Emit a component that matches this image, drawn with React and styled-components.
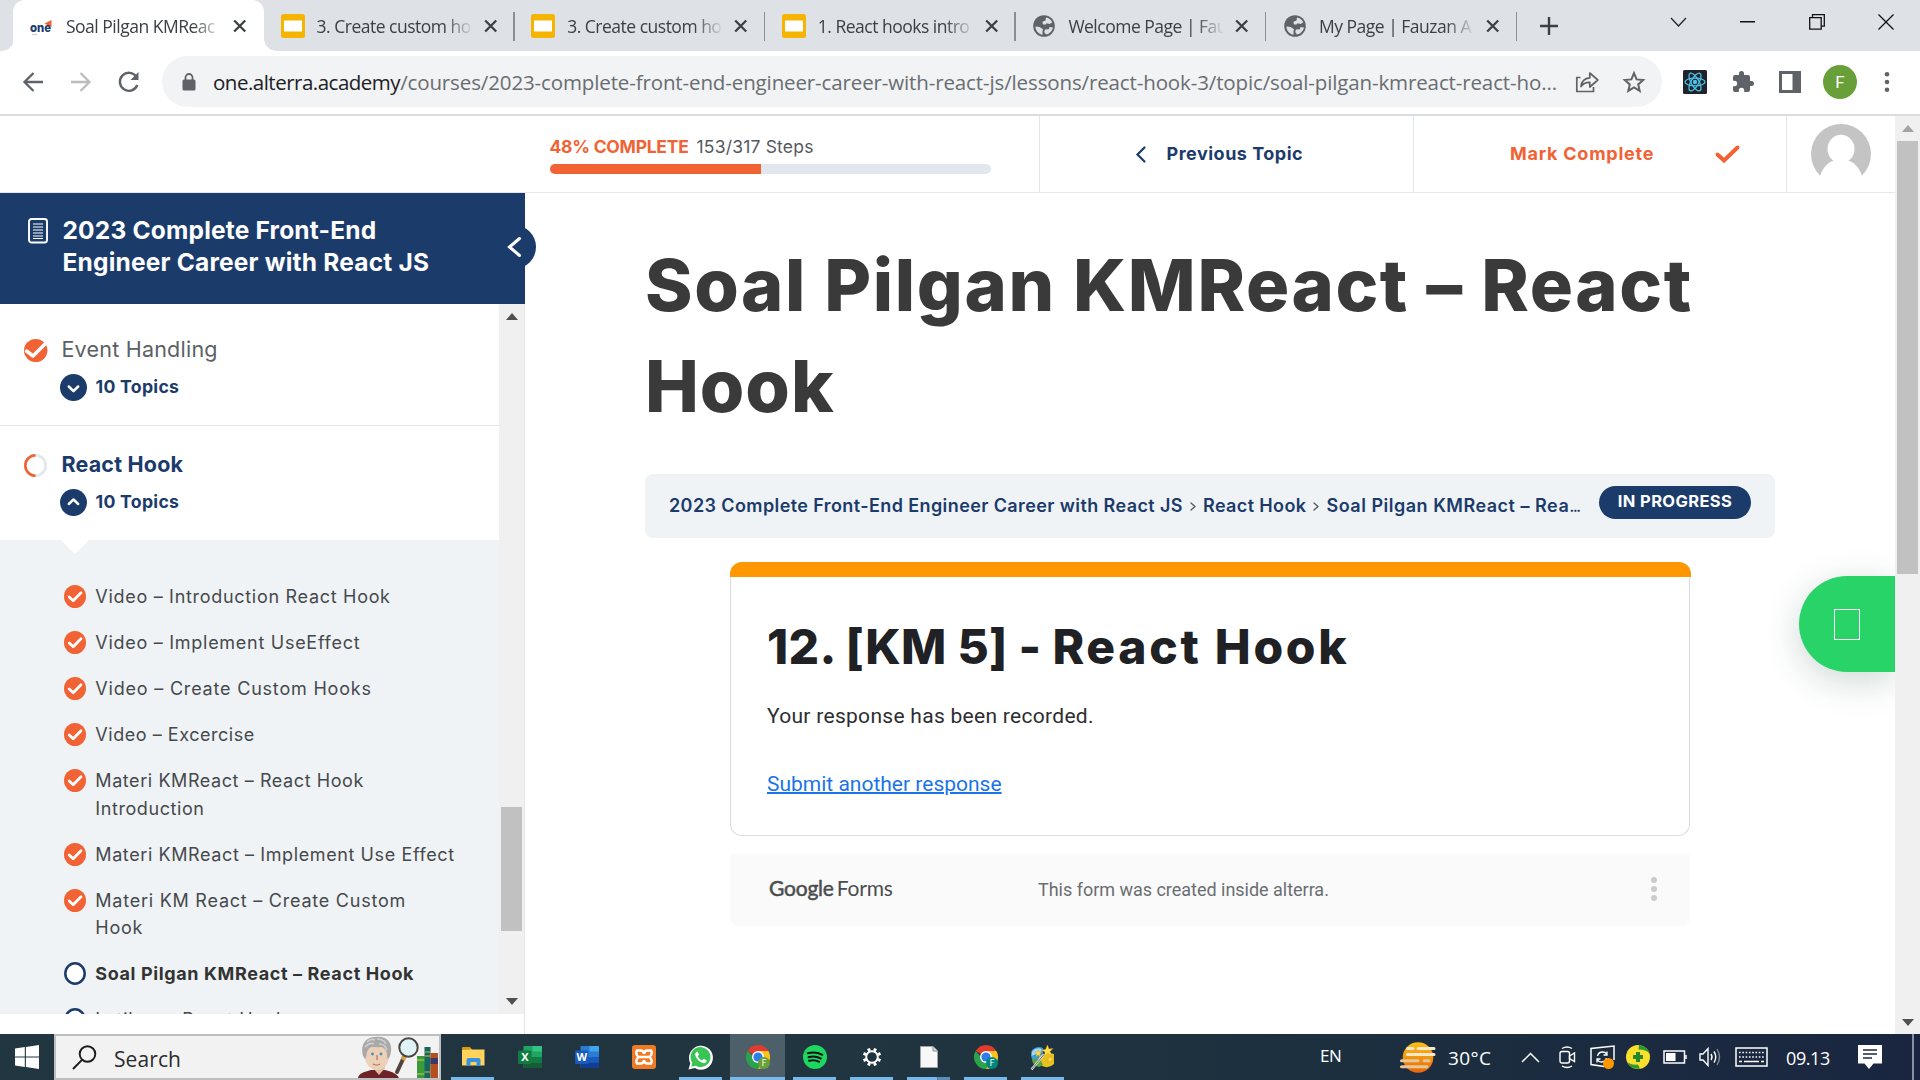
import React from 'react';
import styled, { createGlobalStyle, css } from 'styled-components';

const navy = '#1b3b6b';
const orange = '#f16334';
const line = '#e2e7ed';
const pale = '#eff3f6';
const brandFont = 'Inter, sans-serif';
const systemFont = '"Open Sans", "Noto Sans", sans-serif';

const GlobalStyle = createGlobalStyle`
  * { box-sizing: border-box; }
  body { margin: 0; background: #fff; overflow: hidden; font-family: ${brandFont}; }
  svg { display: block; flex: none; overflow: visible; }
  h1, h2, p { margin: 0; }
`;

const Desktop = styled.div`
  width: 1920px;
  height: 1080px;
  display: flex;
  flex-direction: column;
  overflow: hidden;
`;

/* ---------- browser ---------- */

const TabStrip = styled.div`
  height: 51px;
  flex: none;
  display: flex;
  background: #dee1e6;
  padding-left: 13.5px;
  font-family: ${systemFont};
`;

const Tab = styled.div`
  position: relative;
  width: 250.6px;
  flex: none;
  display: flex;
  align-items: center;
  padding: 0 17px 0 16.5px;
  background: ${(p) => (p.$active ? '#fff' : 'transparent')};
  border-radius: 12px 12px 0 0;
  ${(p) => p.$active && css`
    box-shadow: -1px 0 0 #fff;
    &::before, &::after {
      content: '';
      position: absolute;
      bottom: 0;
      width: 12px;
      height: 12px;
    }
    &::before { left: -12px; background: radial-gradient(circle at 0 0, transparent 11.5px, #fff 12px); }
    &::after { right: -12px; background: radial-gradient(circle at 100% 0, transparent 11.5px, #fff 12px); }
  `}
`;

const TabTitle = styled.span`
  width: 155px;
  margin: 0 12px;
  overflow: hidden;
  white-space: nowrap;
  font-size: 17.5px;
  line-height: 26px;
  letter-spacing: -0.5px;
  color: #3c4043;
  mask-image: linear-gradient(90deg, #000 82%, transparent 101%);
`;

const TabDivider = styled.i`
  position: absolute;
  right: 0;
  top: 12px;
  width: 1.5px;
  height: 29px;
  background: #8b8e93;
`;

const NewTab = styled.div`
  width: 64px;
  display: flex;
  align-items: center;
  justify-content: center;
`;

const WindowControls = styled.div`
  margin-left: auto;
  height: 43px;
  display: flex;
  & > * { width: 69px; display: flex; align-items: center; justify-content: center; }
`;

const Toolbar = styled.div`
  height: 65px;
  flex: none;
  display: flex;
  align-items: center;
  padding: 0 29px 2px 21px;
  border-bottom: 2px solid #dadcdf;
  background: #fff;
`;

const NavButtons = styled.div`
  width: 141px;
  display: flex;
  gap: 24px;
`;

const Omnibox = styled.div`
  width: 1500px;
  height: 51px;
  display: flex;
  align-items: center;
  padding: 0 16px 0 20px;
  border-radius: 26px;
  background: #f1f3f4;
`;

const Url = styled.span`
  width: 1362px;
  margin-left: 17px;
  font-family: ${systemFont};
  font-size: 20.5px;
  letter-spacing: -0.125px;
  line-height: 30px;
  white-space: nowrap;
  color: #696d72;
  b { font-weight: 400; color: #202124; letter-spacing: -0.5px; }
`;

const OmniActions = styled.div`
  display: flex;
  align-items: center;
  gap: 24px;
`;

const Extensions = styled.div`
  flex: 1;
  display: flex;
  align-items: center;
  justify-content: space-between;
  padding-left: 21px;
`;

const Profile = styled.span`
  width: 34px;
  height: 34px;
  margin: 0 2px 0 -2px;
  border-radius: 50%;
  background: #689f38;
  color: #fff;
  display: flex;
  align-items: center;
  justify-content: center;
  font: 400 17px Roboto, sans-serif;
`;

/* ---------- page ---------- */

const Page = styled.div`
  flex: 1;
  min-height: 0;
  display: flex;
`;

const Site = styled.div`
  width: 1895px;
  display: flex;
  flex-direction: column;
  position: relative;
`;

const Scrollbar = styled.div`
  width: ${(p) => p.$w}px;
  flex: none;
  display: flex;
  flex-direction: column;
  align-items: center;
  padding: 9px 0 ${(p) => p.$end || 9}px;
  background: #f0f0f0;
`;

const Thumb = styled.div`
  width: 21px;
  height: ${(p) => p.$h}px;
  margin: ${(p) => p.$gap}px 0 auto;
  background: #c1c1c1;
`;

const FocusBar = styled.header`
  height: 77px;
  flex: none;
  display: grid;
  grid-template-columns: 514px 374px 373px 1fr;
  padding-left: 525px;
  border-bottom: 1px solid ${line};
`;

const FocusCell = styled.div`
  display: flex;
  align-items: center;
  border-left: ${(p) => (p.$first ? 0 : 1)}px solid ${line};
  padding-left: ${(p) => p.$pad}px;
  gap: ${(p) => p.$gap || 0}px;
  font-weight: 700;
  font-size: 18px;
  letter-spacing: ${(p) => p.$ls || 0}px;
  line-height: 24px;
  white-space: nowrap;
  color: ${(p) => p.$color || navy};
`;

const Progress = styled.div`
  width: 441px;
`;

const ProgressLabel = styled.div`
  display: flex;
  gap: 8px;
  font-size: 17.5px;
  line-height: 24px;
  letter-spacing: 0.19px;
  font-weight: 400;
  color: #55595e;
  b { font-weight: 700; color: ${orange}; letter-spacing: -0.25px; }
`;

const Track = styled.div`
  height: 10px;
  margin-top: 5px;
  border-radius: 5px;
  background: ${line};
  overflow: hidden;
`;

const Fill = styled.div`
  width: 48%;
  height: 100%;
  background: ${orange};
`;

const Body = styled.div`
  flex: 1;
  min-height: 0;
  display: flex;
`;

const Sidebar = styled.aside`
  width: 525px;
  flex: none;
  display: flex;
  flex-direction: column;
  border-right: 1px solid ${line};
`;

const CourseHead = styled.div`
  position: relative;
  width: 525px;
  height: 111px;
  flex: none;
  display: flex;
  gap: 14.500px;
  padding: 21px 0 0 28px;
  background: ${navy};
  color: #fff;
  & > svg { margin-top: 4px; }
`;

const CourseTitle = styled.h2`
  font-size: 24.5px;
  line-height: 32px;
  letter-spacing: 0.19px;
  font-weight: 700;
`;

const Collapse = styled.button`
  position: absolute;
  right: -11px;
  top: 32px;
  width: 44px;
  height: 44px;
  padding: 0;
  border: 0;
  border-radius: 50%;
  background: ${navy};
  display: flex;
  align-items: center;
  justify-content: center;
`;

const ListPane = styled.div`
  height: 710px;
  display: flex;
  overflow: hidden;
`;

const Lessons = styled.div`
  width: 499px;
  flex: none;
`;

const Lesson = styled.section`
  display: grid;
  grid-template-columns: 24px 1fr;
  column-gap: 13.4px;
  padding: ${(p) => p.$top}px 0 24px 24px;
  border-bottom: ${(p) => (p.$open ? 0 : 1)}px solid ${line};
  & > svg { align-self: center; }
`;

const LessonName = styled.div`
  font-size: 21.5px;
  line-height: 28.500px;
  padding-bottom: 1.500px;
  letter-spacing: 0.23px;
  font-weight: ${(p) => (p.$current ? 700 : 400)};
  ${(p) => p.$current && css`letter-spacing: 0.2px;`}
  color: ${(p) => (p.$current ? navy : '#5a6165')};
`;

const TopicCount = styled.div`
  grid-column: 2;
  height: 27px;
  margin: 9px 0 0 -1.400px;
  display: flex;
  align-items: center;
  gap: 8.500px;
  font-size: 17.7px;
  font-weight: 700;
  letter-spacing: 0.28px;
  color: ${navy};
  & > span { padding-bottom: 2px; }
`;

const Topics = styled.div`
  padding-left: 64px;
  min-height: 480px;
  background: ${pale};
`;

const Notch = styled.div`
  width: 0;
  border: 14px solid transparent;
  border-top-color: #fff;
  border-bottom-width: 29.800px;
  margin-left: -3px;
`;

const Topic = styled.div`
  display: flex;
  gap: 9.300px;
  margin-bottom: 18.5px;
  font-size: 18px;
  line-height: 27.5px;
  letter-spacing: ${(p) => p.$ls}px;
  font-weight: ${(p) => (p.$current ? 700 : 400)};
  color: ${(p) => (p.$current ? '#333' : '#46494c')};
  & > svg { margin-top: 2.2px; }
  & > span { width: 375px; white-space: pre-line; }
`;

const Main = styled.main`
  flex: 1;
  padding: 41px 120px 0 120px;
`;

const Title = styled.h1`
  font-size: 72px;
  line-height: 101px;
  letter-spacing: 0.95px;
  font-weight: 800;
  color: #3a3a3a;
  white-space: nowrap;
  span { letter-spacing: 1.6px; }
`;

const Crumbs = styled.nav`
  height: 64px;
  margin-top: 38px;
  display: flex;
  align-items: center;
  padding: 0 24px;
  border-radius: 8px;
  background: ${pale};
  font-size: 18px;
  font-weight: 600;
  color: ${navy};
  white-space: nowrap;
  & > svg { margin: 0 7px 0; }
`;

const Crumb = styled.span`
  padding-bottom: 2px;
  letter-spacing: ${(p) => p.$ls}px;
  small { font-size: 18px; font-weight: 400; letter-spacing: -1.8px; }
`;

const Badge = styled.span`
  height: 33px;
  margin: 0 0 7px auto;
  padding: 0 18.8px;
  border-radius: 17px;
  background: ${navy};
  color: #fff;
  font-size: 16.5px;
  font-weight: 700;
  letter-spacing: 0.38px;
  line-height: 31px;
`;

const FormFrame = styled.div`
  width: 961px;
  margin: 24px 0 0 85px;
`;

const FormStripe = styled.div`
  height: 15px;
  border-radius: 12px 12px 0 0;
  background: #ff9800;
`;

const FormCard = styled.div`
  width: 960px;
  height: 259px;
  padding: 40px 36px 0;
  border: 1px solid #dadce0;
  border-top: 0;
  border-radius: 0 0 12px 12px;
  font-family: Roboto, sans-serif;
  font-size: 21px;
  line-height: 30px;
  color: #2c2d30;
`;

const FormTitle = styled.h2`
  font-family: ${brandFont};
  font-size: 48px;
  line-height: 60px;
  letter-spacing: 0.32px;
  font-weight: 800;
  color: #202124;
  span { letter-spacing: 2.7px; }
`;

const FormText = styled.p`
  margin-top: 24px;
  letter-spacing: 0.29px;
`;

const FormLink = styled.a`
  display: inline-block;
  margin-top: 38px;
  color: #1a73e8;
  text-decoration: underline;
  text-decoration-thickness: 2px;
`;

const FormFooter = styled.div`
  width: 960px;
  height: 72px;
  margin-top: 18px;
  display: flex;
  align-items: center;
  padding: 0 32px 4px 39px;
  border-radius: 0 0 8px 8px;
  background: #fafafa;
  font: 400 18px Roboto, sans-serif;
  color: #5f6368;
`;

const FormsLogo = styled.span`
  width: 269px;
  display: flex;
  gap: 3px;
  font-family: Lato, sans-serif;
  font-size: 21px;
  letter-spacing: -0.18px;
  line-height: 26px;
  color: #4a4d50;
  b { font-weight: 400; letter-spacing: -0.2px; -webkit-text-stroke: 0.5px #4a4d50; }
`;

const FormNote = styled.span`
  padding-top: 3px;
  letter-spacing: -0.02px;
  color: #6a6d71;
`;

const MoreDots = styled.span`
  margin-left: auto;
  padding-top: 2px;
`;

const ChatButton = styled.button`
  position: absolute;
  right: 0;
  top: 460px;
  width: 96px;
  height: 96px;
  padding: 0;
  border: 0;
  border-radius: 48px 0 0 48px;
  background: #28d467;
  box-shadow: 0 9px 36px rgba(0, 64, 48, 0.2);
  display: flex;
  align-items: center;
  justify-content: center;
  clip-path: inset(-80px 0 -80px -80px);
`;

const MissingGlyph = styled.i`
  width: 26px;
  height: 31px;
  margin-top: 1px;
  border: 1.5px solid #fff;
`;

/* ---------- taskbar ---------- */

const Taskbar = styled.footer`
  height: 46px;
  flex: none;
  display: flex;
  background: linear-gradient(90deg, #213640 0%, #20353f 45%, #1c2f3f 70%, #1a2640 100%);
  font-family: ${systemFont};
  color: #fff;
`;

const Start = styled.div`
  width: 54px;
  padding: 11px 0 0 15px;
`;

const SearchBox = styled.div`
  width: 387px;
  display: flex;
  align-items: center;
  padding-left: 16px;
  border: 2px solid #bdbfc1;
  background: #f2f2f2;
  overflow: hidden;
  font-size: 21px;
  letter-spacing: 0.08px;
  color: #2b2b2b;
  & > span { margin: 3px auto 0 17px; }
`;

const Apps = styled.div`
  display: flex;
  margin-left: 3px;
`;

const AppButton = styled.div`
  position: relative;
  width: 57px;
  display: flex;
  align-items: center;
  justify-content: center;
  background: ${(p) => (p.$active ? 'linear-gradient(#4d5f69, #4d5f69) center / 55px 100% no-repeat' : 'none')};
  &::after {
    content: '';
    position: absolute;
    bottom: 0;
    left: ${(p) => (p.$active ? 1 : 7)}px;
    right: ${(p) => (p.$active ? 1 : 7)}px;
    height: 3px;
    background: ${(p) => (p.$stacked ? 'linear-gradient(90deg, #76b9ed 69%, #45668a 69%, #5c8db9 73%)' : '#76b9ed')};
    display: ${(p) => (p.$running ? 'block' : 'none')};
  }
`;

const Tray = styled.div`
  margin-left: auto;
  display: flex;
  align-items: center;
  & > * { flex: none; }
`;

const TrayItem = styled.span`
  width: ${(p) => p.$w}px;
  height: 46px;
  display: flex;
  align-items: center;
  font-size: ${(p) => p.$fs || 19}px;
  letter-spacing: ${(p) => p.$ls || 0}px;
  padding-top: ${(p) => p.$drop || 0}px;
  padding-bottom: ${(p) => p.$lift || 0}px;
`;

const PeekEdge = styled.i`
  width: 2px;
  height: 46px;
  background: #8790a0;
`;

/* ---------- icons ---------- */

const CloseX = () => (
  <svg width="14" height="14" viewBox="0 0 14 14" stroke="#3c4043" strokeWidth="2.3"><path d="M1.2 1.5l11 11M12.2 1.5l-11 11" /></svg>
);

const OneIcon = () => (
  <svg width="24" height="24" viewBox="0 0 24 24">
    <path d="M14.500 9.500L21.500 6v7z" fill={orange} />
    <text x="0" y="17.500" fontFamily="Inter, sans-serif" fontWeight="800" fontSize="12.500" textLength="21" lengthAdjust="spacingAndGlyphs" fill="#1b3b6b">one</text>
    <path d="M2 20.500h5" stroke="#d5d2dd" strokeWidth="1.500" />
  </svg>
);

const SlidesIcon = () => (
  <svg width="24" height="24" viewBox="0 0 24 24"><rect width="24" height="24" rx="2.500" fill="#f5b400" /><rect x="3" y="6.500" width="18" height="11" fill="#fff" /></svg>
);

const GlobeIcon = () => (
  <svg width="24" height="24" viewBox="0 0 24 24">
    <circle cx="12" cy="12" r="10.800" fill="#5f6368" />
    <path d="M14 3.500l-.5 3-3 1.200.3 2.500 2.400.6 1.400-1.500 3 .8 2.700-1.800C19 5.600 16.800 4 14 3.500zM3.400 12.500l4.200.6 3.400 2.200-.6 2.400.2 3C6.600 20.200 3.500 16.800 3.400 12.500zM13 15.500l3.800-.2.700-2.300 3.500.4c-.7 3.400-3.300 6.200-7 7.200l-1.800-2.600z" fill="#dee1e6" />
  </svg>
);

const BackIcon = ({ color, flip }) => (
  <svg width="24" height="22" viewBox="0 0 24 22" fill="none" stroke={color} strokeWidth="2.300" transform={flip ? 'scale(-1 1)' : undefined}>
    <path d="M22 11H3.500M12.500 2L3.500 11l9 9" />
  </svg>
);

const ReloadIcon = () => (
  <svg width="24" height="22" viewBox="0 0 24 22" fill="none" stroke="#5f6368" strokeWidth="2.400"><path d="M19.500 6A9 9 0 1 0 20.300 14" /><path d="M21.500 1v8h-8z" fill="#5f6368" stroke="none" /></svg>
);

const LockIcon = () => (
  <svg width="14" height="18" viewBox="0 0 14 18"><rect x="0.500" y="6.500" width="13" height="11" rx="1.500" fill="#5f6368" /><path d="M3.500 7V4.500a3.500 3.500 0 0 1 7 0V7" fill="none" stroke="#5f6368" strokeWidth="1.800" /></svg>
);

const ShareIcon = () => (
  <svg width="24" height="22" viewBox="0 0 24 22" fill="none" stroke="#5f6368" strokeWidth="1.700" strokeLinejoin="round">
    <path d="M5.500 6.500H1.800V20.500H18.500V16" />
    <path d="M6 15.500c.6-5.300 3.600-8.200 8.800-8.600V2l8 7-8 7v-4.700c-4-.2-6.800 1.200-8.800 4.200z" />
  </svg>
);

const StarIcon = () => (
  <svg width="22" height="22" viewBox="0 0 22 22" fill="none" stroke="#5f6368" strokeWidth="2"><path d="M11 2.200l2.600 6.200 6.600.6-5 4.400 1.500 6.500L11 16.500l-5.700 3.400 1.500-6.500-5-4.400 6.600-.6z" /></svg>
);

const ReactIcon = () => (
  <svg width="24" height="24" viewBox="0 0 24 24">
    <rect width="24" height="24" rx="1.500" fill="#20232a" />
    <g fill="none" stroke="#4cc3ea" strokeWidth="1.300">
      {[0, 60, 120].map((a) => <ellipse key={a} cx="12" cy="12" rx="10" ry="3.900" transform={`rotate(${a} 12 12)`} />)}
    </g>
    <circle cx="12" cy="12" r="2.200" fill="#4cc3ea" />
  </svg>
);

const PuzzleIcon = () => (
  <svg width="24" height="24" viewBox="0 0 24 24" fill="#5f6368"><path d="M20.500 11H19V7a2 2 0 0 0-2-2h-4V3.500a2.500 2.500 0 0 0-5 0V5H4a2 2 0 0 0-2 2v3.800h1.500a2.700 2.700 0 0 1 0 5.400H2V20c0 1.100.9 2 2 2h3.800v-1.500a2.700 2.700 0 0 1 5.400 0V22H17a2 2 0 0 0 2-2v-4h1.500a2.500 2.500 0 0 0 0-5z" /></svg>
);

const PanelIcon = () => (
  <svg width="22" height="22" viewBox="0 0 22 22"><path d="M0 0h22v22H0zM3 3v16h10.500V3z" fill="#5f6368" fillRule="evenodd" /></svg>
);

const Dots = ({ h, color, r }) => (
  <svg width="8" height={h} viewBox={`0 0 8 ${h}`} fill={color}>{[r, h / 2, h - r].map((y) => <circle key={y} cx="4" cy={y} r={r} />)}</svg>
);

const Arrow = ({ down, color }) => (
  <svg width="12" height="7" viewBox="0 0 12 7"><path d={down ? 'M0 0h12L6 7z' : 'M0 7h12L6 0z'} fill={color} /></svg>
);

const Chevron = ({ w, h, color, sw, dir }) => {
  const shapes = {
    left: `M${w - 1.5} 1.500L1.500 ${h / 2}L${w - 1.5} ${h - 1.5}`,
    right: `M1 1L${w - 1} ${h / 2}L1 ${h - 1}`,
  };
  return <svg width={w} height={h} viewBox={`0 0 ${w} ${h}`} fill="none" stroke={color} strokeWidth={sw} strokeLinecap="round"><path d={shapes[dir]} /></svg>;
};

const CheckIcon = () => (
  <svg width="25" height="20" viewBox="0 0 25 20" fill="none" stroke={orange} strokeWidth="4" strokeLinecap="round"><path d="M2.500 10.500L9 16.500L22.500 3.500" /></svg>
);

const AvatarIcon = () => (
  <svg width="60" height="60" viewBox="0 0 60 60">
    <circle cx="30" cy="30" r="30" fill="#c4c4c4" />
    <ellipse cx="30" cy="25" rx="13.500" ry="14.300" fill="#fff" />
    <path d="M9 52C12 43 17 38 24 36h12c7 2 12 7 15 16L46 62H14z" fill="#fff" />
  </svg>
);

const BookIcon = () => (
  <svg width="20" height="26" viewBox="0 0 20 26" fill="none" stroke="#fff">
    <rect x="1" y="1" width="18" height="23.500" rx="2.500" strokeWidth="1.900" />
    <path d="M5 6h10M5 9h10M5 12h10M5 15h10M5 18h10M5 20.500h10" strokeWidth="1.200" />
  </svg>
);

const DoneIcon = ({ bleed }) => (
  <svg width={bleed ? 24 : 22} height="23" viewBox={bleed ? '0 0 24 23' : '0 0 22 23'}>
    <ellipse cx={bleed ? 11.7 : 11} cy="11.500" rx={bleed ? 11.7 : 11} ry="11.500" fill={orange} />
    <path d={bleed ? 'M2.500 12l6.500 5L22 4' : 'M5.200 12l4 3.700L17 7.800'} fill="none" stroke="#fff" strokeWidth={bleed ? 3.5 : 2.8} strokeLinecap="round" strokeLinejoin="round" />
  </svg>
);

const OpenIcon = () => (
  <svg width="22" height="23" viewBox="0 0 22 23"><ellipse cx="11" cy="11.500" rx="9.700" ry="10.200" fill="#fff" stroke={navy} strokeWidth="2.500" /></svg>
);

const HalfRing = () => (
  <svg width="23" height="23" viewBox="0 0 23 23" fill="none" strokeWidth="2.600"><circle cx="11.500" cy="11.500" r="10.200" stroke={line} /><path d="M11.500 1.300a10.200 10.200 0 0 0 0 20.400" stroke={orange} /></svg>
);

const CircleChevron = ({ up }) => (
  <svg width="27" height="27" viewBox="0 0 27 27"><circle cx="13.500" cy="13.500" r="13.500" fill={navy} /><path d={up ? 'M8.800 15l4.700-4.500L18.200 15' : 'M8.800 12.500l4.700 4.700L18.200 12.500'} fill="none" stroke="#fff" strokeWidth="2.500" strokeLinecap="round" strokeLinejoin="round" /></svg>
);

const WindowsLogo = () => (
  <svg width="24" height="24" viewBox="0 0 24 24" fill="#fff"><path d="M0 3.400l9.800-1.400v9.500H0zM10.900 1.900L24 0v11.500H10.900zM0 12.500h9.800V22L0 20.600zM10.900 12.500H24V24l-13.100-1.900z" /></svg>
);

const SearchIcon = () => (
  <svg width="25" height="25" viewBox="0 0 25 25" fill="none" stroke="#1b1b1b" strokeWidth="1.900"><circle cx="15.500" cy="9" r="7.800" /><path d="M10 14.800L1 24" /></svg>
);

const SearchArt = () => (
  <svg width="82" height="42" viewBox="0 0 82 42">
    <path d="M1 42c1-5 6-6 13-8h14c8 2 12 4 14 8z" fill="#6d2328" />
    <path d="M16 32l6 7 6-7-1-6H17z" fill="#dcbda2" />
    <ellipse cx="20" cy="20" rx="12" ry="14" fill="#ecd0b8" />
    <path d="M6 20C3 10 8 1 18 1c13-2 19 7 15 19-2 4-3 3-3-1 0-5-3-8-7-8-6 1-9-2-12 3-2 3-1 8-3 9z" fill="#a9a9a9" />
    <path d="M10 6q4-4 8-2M20 3q7 0 9 5M8 11q5-5 9-3M22 8q6 0 8 6" stroke="#cfcfcf" strokeWidth="1.600" fill="none" />
    <circle cx="15.500" cy="18" r="1.400" fill="#4a8db5" /><circle cx="24" cy="18" r="1.400" fill="#4a8db5" />
    <path d="M20 19v5M16 28q4 2 7 0" stroke="#b07860" strokeWidth="1.200" fill="none" />
    <path d="M47 21l-7 15" stroke="#51433d" strokeWidth="4" strokeLinecap="round" /><path d="M49 18l-3 6" stroke="#e2a53d" strokeWidth="4" />
    <circle cx="51.500" cy="11.500" r="9.200" fill="#dff3f7" stroke="#4a4442" strokeWidth="2" />
    <rect x="60" y="20" width="8" height="22" fill="#3c9a3a" /><path d="M60 24h8M60 38h8" stroke="#b8d860" />
    <rect x="67.500" y="11" width="6" height="31" fill="#14685f" /><path d="M67.500 16h6M67.500 20h6M67.500 36h6" stroke="#d9b24c" />
    <rect x="73.500" y="17" width="7.500" height="25" fill="#b4501f" /><rect x="73.500" y="22" width="7.500" height="6" fill="#3b3a63" />
  </svg>
);

const ExplorerIcon = () => (
  <svg width="24" height="24" viewBox="0 0 24 24"><path d="M1 4.500V3q0-1 1-1h7l2.500 3z" fill="#d99a09" /><rect x="1" y="4.500" width="22.500" height="16" fill="#ffd35c" /><path d="M5.500 21v-6q0-2 2-2h10q2 0 2 2v6h-4v-4h-6v4z" fill="#3a92dd" /></svg>
);

const OfficeIcon = ({ letter, shades }) => (
  <svg width="24" height="24" viewBox="0 0 24 24">
    <rect x="5.500" y="1" width="18.500" height="22" rx="1" fill={shades[1]} />
    <path d="M14.500 1H23q1 0 1 1v4.500h-9.500z" fill={shades[0]} />
    <path d="M5.500 12H24v5.500H5.500z" fill={shades[2]} /><path d="M5.500 17.500H24V22q0 1-1 1H6.500q-1 0-1-1z" fill={shades[3]} />
    <rect x="0" y="5.500" width="13.500" height="13.500" rx="1" fill={shades[4]} />
    <text x="6.800" y="16.300" textAnchor="middle" fontFamily="Open Sans, sans-serif" fontWeight="700" fontSize="11" fill="#fff">{letter}</text>
  </svg>
);

const XamppIcon = () => (
  <svg width="24" height="24" viewBox="0 0 24 24"><rect width="24" height="24" rx="3" fill="#f07a23" /><g fill="none" stroke="#fff" strokeWidth="2.400"><path d="M5 5.500h3.500q3 0 3.500 3.200.5-3.200 3.500-3.200H19q2 3.200-1.500 6.500Q21 15.500 19 18.500h-3.500q-3 0-3.500-3.200-.5 3.200-3.500 3.200H5q-2-3 1.500-6.500Q3 8.700 5 5.500zM7 12h10" /></g></svg>
);

const WhatsAppIcon = () => (
  <svg width="25" height="25" viewBox="0 0 25 25"><path d="M.5 24.500l1.800-6.300A12 12 0 1 1 6.800 23z" fill="#fff" /><path d="M3.300 21.700l1-3.900a10 10 0 1 1 3.300 3z" fill="#39c453" /><path d="M8.800 6.800c-1.800 1-2 3-1 5 1.500 3 4 5.400 7.200 6.300 1.800.4 3.600-.7 3.700-2.600l-3-1.700-1.600 1.700c-2-.8-3.500-2.300-4.300-4.200L11 9.700 9.800 6.800z" fill="#fff" /></svg>
);

const ChromeIcon = ({ badge }) => (
  <svg width="24" height="24" viewBox="0 0 24 24">
    <path d="M12 12L1.600 6A12 12 0 0 1 22.400 6z" fill="#e33b2e" />
    <path d="M12 12h-5L1.600 6A12 12 0 0 0 12 24l5-9z" fill="#2ba24c" />
    <path d="M12 6h10.400A12 12 0 0 1 12 24l5.200-9z" fill="#fcc31e" />
    <circle cx="12" cy="12" r="6" fill="#fff" /><circle cx="12" cy="12" r="4.600" fill="#2f7de9" />
    <circle cx="18" cy="18" r="6" fill={badge} />
    <text x="18" y="21.200" textAnchor="middle" fontFamily="Roboto, sans-serif" fontSize="8.500" fill="#fff">F</text>
  </svg>
);

const SpotifyIcon = () => (
  <svg width="24" height="24" viewBox="0 0 24 24"><circle cx="12" cy="12" r="12" fill="#1ed760" /><path d="M4.800 8.300q7.500-2.200 14.500 1.500M5.500 12.200q6.500-1.800 12.200 1.300M6 15.800q5.500-1.500 10.200 1" fill="none" stroke="#111" strokeWidth="2" strokeLinecap="round" /></svg>
);

const GearIcon = () => (
  <svg width="20" height="20" viewBox="0 0 20 20" fill="none" stroke="#fff"><circle cx="10" cy="10" r="5.800" strokeWidth="2" />{[22.5, 67.5, 112.5, 157.5, 202.5, 247.5, 292.5, 337.5].map((a) => <path key={a} d="M10 3.600V.800" strokeWidth="3" transform={`rotate(${a} 10 10)`} />)}</svg>
);

const FileIcon = () => (
  <svg width="18" height="22" viewBox="0 0 18 22"><path d="M.5.500h12.500l4.500 4.500v16.500H.5z" fill="#f8f8f8" stroke="#a3a3a3" /><path d="M13 .500v4.500h4.500" fill="#ddd" stroke="#8c8c8c" /></svg>
);

const WandIcon = () => (
  <svg width="25" height="25" viewBox="0 0 25 25">
    <path d="M2 5q5-5 11-2v11H2q-2-5 0-9z" fill="#3c9bd8" /><path d="M2.500 6q4-4 9-2l-1 4q-4 0-9 3z" fill="#a8daf2" />
    <path d="M10 11q8-4 14-2v10q-5 5-12 2l-6-3z" fill="#e9c01f" /><path d="M2 14h8l3 6-4 2q-7-2-7-8z" fill="#57a63b" />
    <path d="M1.500 24.500L14 9.500" stroke="#ddd" strokeWidth="2.400" /><path d="M1.500 24.500L14 9.500" stroke="#555" strokeWidth=".8" />
    <path d="M17.500 0l1.500 4 4-.5-3 3 2 4-4.300-2-3.400 3 .7-4.500L11 5l4.500-.5zM8 5l1 2h2.500L9.800 9l.6 2.500L8 10l-2 1.500L6.500 9 5 7h2.300zM20 11l1 2 2.500.3-2 1.500.5 2.500-2-1.300-2 1.300.5-2.500-1.700-1.500h2.400z" fill="#ffe04a" stroke="#d19a12" strokeWidth=".4" />
  </svg>
);

const WeatherIcon = () => (
  <svg width="36" height="31" viewBox="0 0 36 31">
    <defs><linearGradient id="sun" x1="0" y1="0" x2="0" y2="1"><stop offset="0" stopColor="#fdc013" /><stop offset="1" stopColor="#e8670c" /></linearGradient></defs>
    <circle cx="18" cy="15.500" r="15.300" fill="url(#sun)" />
    <g strokeLinecap="round" strokeWidth="3"><path d="M7.500 6.500H13M18 6.500h16M7.500 12.500H34" stroke="#f8e9cd" /><path d="M1.500 18.700H18M24 18.700h5M1.500 24.700H27" stroke="#e5c799" /></g>
  </svg>
);

const trayLine = { fill: 'none', stroke: '#fff', strokeWidth: 1.5 };

const TrayUp = () => <svg width="19" height="11" viewBox="0 0 19 11" {...trayLine}><path d="M1 10l8.500-8.500L18 10" /></svg>;
const MeetIcon = () => <svg width="17" height="22" viewBox="0 0 17 22" {...trayLine} strokeWidth="1.400"><rect x="1" y="5.500" width="9.500" height="11.500" rx="2" /><path d="M10.500 10l5-3v8.500l-5-3zM3 2.500q5-3 10 0M3 20q5 3 10 0" /></svg>;
const SyncIcon = () => <svg width="25" height="24" viewBox="0 0 25 24" {...trayLine}><path d="M14 21.500L1 19.500V3.500L24 1v14" /><path d="M7.500 11q1-4 5-4t4 3M17 6.500V10h-3.500M16.500 13q-1.500 4-5 4t-4-3M7 17.500V14h3.500" strokeWidth="1.300" /><circle cx="18.500" cy="18.500" r="5.500" fill="#ff9800" stroke="none" /></svg>;
const ShieldPlus = () => <svg width="24" height="24" viewBox="0 0 24 24"><circle cx="12" cy="12" r="12" fill="#fbdf2a" /><path d="M13 .050A12 12 0 0 1 23.700 9Q21 4.500 12.500 4.500zM1 16.500q4 4 11 3l2 4.300Q4.500 24.500 1 16.500z" fill="#2d9a33" /><path d="M12 7v10M7 12h10" stroke="#21882b" strokeWidth="4" /></svg>;
const BatteryIcon = () => <svg width="24" height="14" viewBox="0 0 24 14" {...trayLine}><rect x="1" y="1" width="20.500" height="12" /><path d="M23 5v4" /><rect x="3" y="3" width="9.500" height="8" fill="#fff" stroke="none" /></svg>;
const VolumeIcon = () => <svg width="22" height="20" viewBox="0 0 22 20" {...trayLine} strokeWidth="1.400"><path d="M1 7h3l5-5.500v17L4 13H1zM12 7q2 3 0 6M15 4.500q3.500 5.500 0 11" /><path d="M18 2q5 8 0 16" stroke="#7e899c" /></svg>;
const KeyboardIcon = () => <svg width="33" height="20" viewBox="0 0 33 20" {...trayLine}><rect x="1" y="1" width="31" height="18" /><path d="M4 5.500h25M4 10h25" strokeDasharray="1.600 1.700" /><path d="M4 14.500h3M9 14.500h15M26 14.500h3" /></svg>;
const NoticeIcon = () => <svg width="24" height="24" viewBox="0 0 24 24"><path d="M0 0h24v18.500H15.500L11 24l-4.500-5.500H0z" fill="#fff" /><path d="M5 5h14M5 9h14M5 13h9" stroke="#1b2a43" strokeWidth="1.300" /></svg>;

/* ---------- data ---------- */

const tabs = [
  { icon: OneIcon, title: 'Soal Pilgan KMReac', active: true },
  { icon: SlidesIcon, title: '3. Create custom ho' },
  { icon: SlidesIcon, title: '3. Create custom ho' },
  { icon: SlidesIcon, title: '1. React hooks intro' },
  { icon: GlobeIcon, title: 'Welcome Page | Fau' },
  { icon: GlobeIcon, title: 'My Page | Fauzan A' },
];

const topics = [
  { name: 'Video – Introduction React Hook', done: true, spacing: 0.7 },
  { name: 'Video – Implement UseEffect', done: true, spacing: 0.72 },
  { name: 'Video – Create Custom Hooks', done: true, spacing: 0.8 },
  { name: 'Video – Excercise', done: true, spacing: 0.54 },
  { name: 'Materi KMReact – React Hook\nIntroduction', done: true, spacing: 0.58 },
  { name: 'Materi KMReact – Implement Use Effect', done: true, spacing: 0.6 },
  { name: 'Materi KM React – Create Custom\nHook', done: true, spacing: 0.76 },
  { name: 'Soal Pilgan KMReact – React Hook', current: true, spacing: 0.62 },
  { name: 'Latihan – React Hook', spacing: 0.6 },
];

const apps = [
  { icon: <ExplorerIcon />, running: true },
  { icon: <OfficeIcon letter="X" shades={['#33c481', '#21a366', '#107c41', '#185c37', '#107c41']} /> },
  { icon: <OfficeIcon letter="W" shades={['#41a5ee', '#2b7cd3', '#185abd', '#103f91', '#185abd']} /> },
  { icon: <XamppIcon /> },
  { icon: <WhatsAppIcon />, running: true },
  { icon: <ChromeIcon badge="#689f38" />, running: true, active: true },
  { icon: <SpotifyIcon />, running: true },
  { icon: <GearIcon />, running: true },
  { icon: <FileIcon />, running: true, stacked: true },
  { icon: <ChromeIcon badge="#00897b" />, running: true },
  { icon: <WandIcon />, running: true },
];

export default function App() {
  return (
    <Desktop>
      <GlobalStyle />
      <TabStrip>
        {tabs.map(({ icon: Icon, title, active }, i) => (
          <Tab key={i} $active={active}>
            <Icon />
            <TabTitle>{title}</TabTitle>
            <CloseX />
            {!active && <TabDivider />}
          </Tab>
        ))}
        <NewTab>
          <svg width="18" height="18" viewBox="0 0 18 18" stroke="#3c4043" strokeWidth="2.400"><path d="M9 0v18M0 9h18" /></svg>
        </NewTab>
        <WindowControls>
          <span><svg width="15" height="10" viewBox="0 0 15 10" fill="none" stroke="#222" strokeWidth="1.200"><path d="M0 1l7.500 8L15 1" /></svg></span>
          <span><svg width="15" height="2" viewBox="0 0 15 2"><path d="M0 0h15v1.500H0z" fill="#111" /></svg></span>
          <span><svg width="16" height="16" viewBox="0 0 16 16" fill="none" stroke="#111" strokeWidth="1.300"><path d="M.7 3.700h11.500v11.500H.700zM3.500 3.700V.700h11.800v11.500h-3" /></svg></span>
          <span><svg width="16" height="16" viewBox="0 0 16 16" stroke="#111" strokeWidth="1.300"><path d="M.5.500l15 15M15.500.500l-15 15" /></svg></span>
        </WindowControls>
      </TabStrip>

      <Toolbar>
        <NavButtons>
          <BackIcon color="#5f6368" />
          <BackIcon color="#babcbe" flip />
          <ReloadIcon />
        </NavButtons>
        <Omnibox>
          <LockIcon />
          <Url><b>one.alterra.academy</b>/courses/2023-complete-front-end-engineer-career-with-react-js/lessons/react-hook-3/topic/soal-pilgan-kmreact-react-ho...</Url>
          <OmniActions><ShareIcon /><StarIcon /></OmniActions>
        </Omnibox>
        <Extensions>
          <ReactIcon />
          <PuzzleIcon />
          <PanelIcon />
          <Profile>F</Profile>
          <Dots h={20} r={2.3} color="#5f6368" />
        </Extensions>
      </Toolbar>

      <Page>
        <Site>
          <FocusBar>
            <FocusCell $first $pad={24.5}>
              <Progress>
                <ProgressLabel><b>48% COMPLETE</b><span>153/317 Steps</span></ProgressLabel>
                <Track><Fill /></Track>
              </Progress>
            </FocusCell>
            <FocusCell $pad={96} $gap={20.5} $ls={0.5}>
              <Chevron w={10} h={17} color={navy} sw={2.2} dir="left" />
              Previous Topic
            </FocusCell>
            <FocusCell $pad={96} $gap={61} $ls={0.75} $color={orange}>
              Mark Complete
              <CheckIcon />
            </FocusCell>
            <FocusCell $pad={24}><AvatarIcon /></FocusCell>
          </FocusBar>

          <Body>
            <Sidebar>
              <CourseHead>
                <BookIcon />
                <CourseTitle>2023 Complete Front-End<br />Engineer Career with React JS</CourseTitle>
                <Collapse><Chevron w={13} h={20} color="#fff" sw={3} dir="left" /></Collapse>
              </CourseHead>
              <ListPane>
                <Lessons>
                  <Lesson $top={31}>
                    <DoneIcon bleed />
                    <LessonName>Event Handling</LessonName>
                    <TopicCount><CircleChevron /><span>10 Topics</span></TopicCount>
                  </Lesson>
                  <Lesson $top={24} $open>
                    <HalfRing />
                    <LessonName $current>React Hook</LessonName>
                    <TopicCount><CircleChevron up /><span>10 Topics</span></TopicCount>
                  </Lesson>
                  <Topics>
                    <Notch />
                    {topics.map((t) => (
                      <Topic key={t.name} $current={t.current} $ls={t.spacing}>
                        {t.done ? <DoneIcon /> : <OpenIcon />}
                        <span>{t.name}</span>
                      </Topic>
                    ))}
                  </Topics>
                </Lessons>
                <Scrollbar $w={25}>
                  <Arrow color="#505050" />
                  <Thumb $h={124} $gap={487} />
                  <Arrow down color="#505050" />
                </Scrollbar>
              </ListPane>
            </Sidebar>

            <Main>
              <Title><span>Soal Pilgan KMReact – React</span><br />Hook</Title>
              <Crumbs>
                <Crumb $ls={0.4}>2023 Complete Front-End Engineer Career with React JS</Crumb>
                <Chevron w={6} h={9} color="#555" sw={1.3} dir="right" />
                <Crumb $ls={0.38}>React Hook</Crumb>
                <Chevron w={6} h={9} color="#555" sw={1.3} dir="right" />
                <Crumb $ls={0.51}>Soal Pilgan KMReact – Rea<small>...</small></Crumb>
                <Badge>IN PROGRESS</Badge>
              </Crumbs>
              <FormFrame>
                <FormStripe />
                <FormCard>
                  <FormTitle>12. [KM 5] - <span>React Hook</span></FormTitle>
                  <FormText>Your response has been recorded.</FormText>
                  <FormLink>Submit another response</FormLink>
                </FormCard>
                <FormFooter>
                  <FormsLogo><b>Google</b><span>Forms</span></FormsLogo>
                  <FormNote>This form was created inside alterra.</FormNote>
                  <MoreDots><Dots h={24} r={3} color="#cbcbcb" /></MoreDots>
                </FormFooter>
              </FormFrame>
            </Main>
          </Body>
          <ChatButton><MissingGlyph /></ChatButton>
        </Site>
        <Scrollbar $w={25} $end={8}>
          <Arrow color="#a3a3a3" />
          <Thumb $h={433} $gap={9} />
          <Arrow down color="#505050" />
        </Scrollbar>
      </Page>

      <Taskbar>
        <Start><WindowsLogo /></Start>
        <SearchBox>
          <SearchIcon />
          <span>Search</span>
          <SearchArt />
        </SearchBox>
        <Apps>
          {apps.map((a, i) => (
            <AppButton key={i} $running={a.running} $active={a.active} $stacked={a.stacked}>{a.icon}</AppButton>
          ))}
        </Apps>
        <Tray>
          <TrayItem $w={80} $fs={17} $ls={-0.5} $lift={4}>EN</TrayItem>
          <TrayItem $w={48}><WeatherIcon /></TrayItem>
          <TrayItem $w={73} $ls={0.4} $drop={2}>30°C</TrayItem>
          <TrayItem $w={38}><TrayUp /></TrayItem>
          <TrayItem $w={31}><MeetIcon /></TrayItem>
          <TrayItem $w={36}><SyncIcon /></TrayItem>
          <TrayItem $w={37}><ShieldPlus /></TrayItem>
          <TrayItem $w={36}><BatteryIcon /></TrayItem>
          <TrayItem $w={36}><VolumeIcon /></TrayItem>
          <TrayItem $w={51}><KeyboardIcon /></TrayItem>
          <TrayItem $w={72} $fs={18} $ls={-0.4} $drop={1}>09.13</TrayItem>
          <TrayItem $w={54}><NoticeIcon /></TrayItem>
          <PeekEdge />
          <TrayItem $w={6} />
        </Tray>
      </Taskbar>
    </Desktop>
  );
}
